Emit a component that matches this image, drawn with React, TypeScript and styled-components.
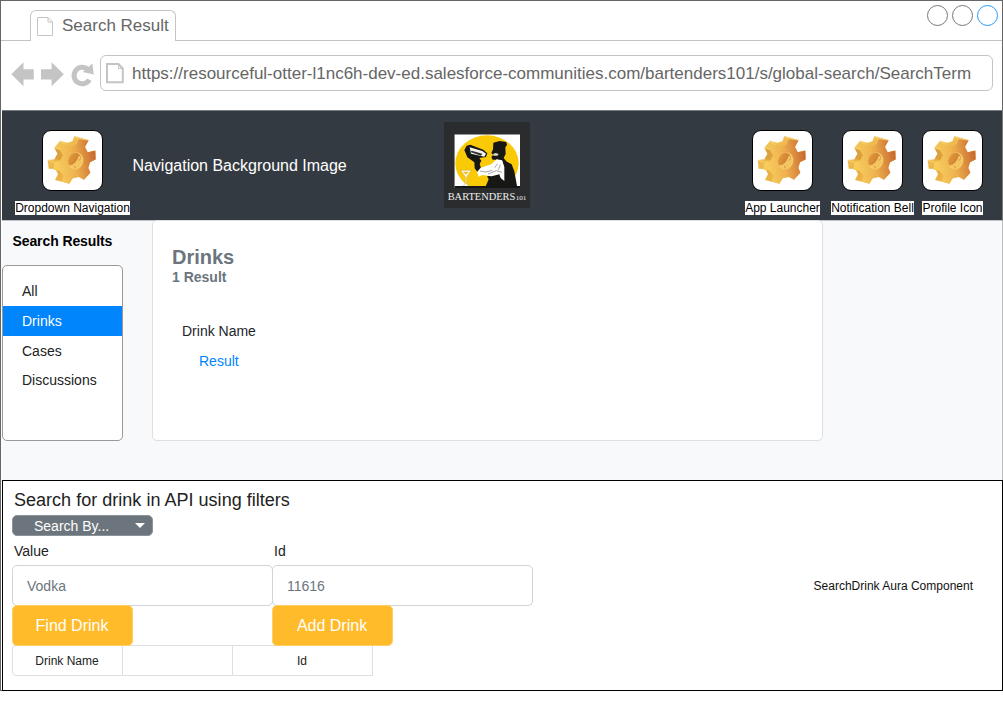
import React from 'react';
import styled, { createGlobalStyle } from 'styled-components';

const GlobalStyle = createGlobalStyle`
  *, *::before, *::after { box-sizing: border-box; }
  body {
    margin: 0;
    background: #fff;
    font-family: "Liberation Sans", Arial, Helvetica, sans-serif;
  }
`;

const Browser = styled.div`
  display: flex;
  flex-direction: column;
  width: 1003px;
  height: 691px;
  border: 1px solid #666;
  background: #fff;
`;

const TabStrip = styled.div`
  display: flex;
  justify-content: space-between;
  height: 40px;
  flex: none;
  padding: 0 4px 0 29px;
  border-bottom: 1px solid #c4c4c4;
`;

const Tab = styled.div`
  display: flex;
  align-items: center;
  align-self: flex-end;
  width: 146px;
  height: 31px;
  margin-bottom: -1px;
  padding-left: 6px;
  gap: 7px;
  border: 1px solid #c4c4c4;
  border-bottom: none;
  border-radius: 6px 6px 0 0;
  background: #fff;
  color: #666;
  font-size: 17px;
  line-height: 30px;
  white-space: nowrap;
`;

const WindowButtons = styled.div`
  display: flex;
  gap: 4px;
  padding-top: 4px;
`;

const WindowButton = styled.span<{ $color: string }>`
  width: 21px;
  height: 21px;
  border: 1px solid ${(p) => p.$color};
  border-radius: 50%;
`;

const Toolbar = styled.div`
  display: flex;
  align-items: flex-start;
  flex: none;
  height: 69px;
  padding: 14px 9px 0 10px;
`;

const HistoryButtons = styled.div`
  display: flex;
  width: 89px;
  padding-top: 6px;
`;

const AddressBar = styled.div`
  display: flex;
  align-items: center;
  flex: 1;
  height: 36px;
  padding-left: 5px;
  gap: 8px;
  border: 1px solid #c4c4c4;
  border-radius: 6px;
  color: #666;
  font-size: 17px;
  white-space: nowrap;
`;

const Address = styled.span`
  padding-top: 2px;
`;

const Page = styled.div`
  display: flex;
  flex-direction: column;
  width: 1001px;
  margin-left: 1px;
`;

const NavBar = styled.header`
  display: flex;
  flex: none;
  height: 111px;
  padding: 11px 19px 0 40px;
  border-top: 1px solid #777b7e;
  border-bottom: 1px solid #bfc2c8;
  border-right: 1px solid #777b7e;
  background: #343a41;
  background-clip: padding-box;
`;

const NavItem = styled.div`
  display: flex;
  flex-direction: column;
  align-items: center;
  width: 61px;
  padding-top: 8px;
`;

const IconTile = styled.div`
  flex: none;
  width: 61px;
  height: 61px;
  border: 1px solid #000;
  border-radius: 9px;
  background: #fff;
  overflow: hidden;
  svg { display: block; margin: -1px; }
`;

const NavLabel = styled.span`
  margin-top: 10px;
  background: #fff;
  color: #000;
  font-size: 12px;
  line-height: 14px;
  white-space: nowrap;
`;

const NavTitle = styled.div`
  width: 312px;
  padding: 35px 0 0 29.4px;
  color: #fff;
  font-size: 16px;
  line-height: 18px;
  white-space: nowrap;
`;

const Logo = styled.div`
  width: 86px;
  height: 86px;
  margin-left: 29px;
  svg { display: block; }
`;

const NavActions = styled.div<{ $gap: number }>`
  display: flex;
  margin-left: ${(p) => p.$gap}px;
`;

const Content = styled.main`
  display: flex;
  align-items: flex-start;
  height: 259px;
  border-right: 1px solid #b9bbbd;
  background: #f8f9fb;
`;

const Sidebar = styled.aside`
  width: 150px;
`;

const SidebarTitle = styled.h2`
  margin: 12px 0 16px 10.5px;
  font-size: 14px;
  line-height: 16px;
  white-space: nowrap;
  letter-spacing: -0.1px;
`;

const FilterList = styled.ul`
  width: 121px;
  height: 176px;
  margin: 0;
  padding: 10px 0 0;
  list-style: none;
  border: 1px solid #999;
  border-radius: 5px;
  background: #fff;
`;

const Filter = styled.li<{ $active?: boolean; $height?: number }>`
  height: ${(p) => p.$height ?? 30}px;
  padding-left: 19px;
  font-size: 14px;
  line-height: 30px;
  background: ${(p) => (p.$active ? '#0085fc' : 'transparent')};
  color: ${(p) => (p.$active ? '#fff' : '#222')};
`;

const ResultCard = styled.section`
  width: 671px;
  height: 221px;
  margin-top: -1px;
  padding: 24px 19px;
  border: 1px solid #dfdfdf;
  border-radius: 5px;
  background: #fff;
`;

const CardTitle = styled.h1`
  margin: 0;
  color: #6c757d;
  font-size: 20px;
  line-height: 24px;
`;

const CardCount = styled.div`
  color: #6c757d;
  font-size: 14px;
  font-weight: bold;
  line-height: 16px;
`;

const ColumnName = styled.div`
  margin: 38px 0 0 10px;
  color: #212529;
  font-size: 14px;
  line-height: 16px;
`;

const ResultLink = styled.a`
  display: block;
  margin: 14px 0 0 27px;
  color: #0085fc;
  font-size: 14px;
  line-height: 16px;
`;

const ApiPanel = styled.section`
  display: flex;
  justify-content: space-between;
  align-items: center;
  height: 211px;
  padding: 0 29px 0 9px;
  border: 1px solid #000;
  background: #fff;
`;

const ApiForm = styled.div`
  align-self: flex-start;
  width: 521px;
`;

const FormTitle = styled.h2`
  margin: 0 0 4px 2px;
  padding-top: 9px;
  color: #222;
  font-size: 18px;
  font-weight: normal;
  line-height: 21px;
  letter-spacing: 0.02px;
`;

const SearchBy = styled.button`
  display: flex;
  align-items: center;
  justify-content: space-between;
  width: 141px;
  height: 21px;
  padding: 0 7px 0 21px;
  border: 1px solid #8b9399;
  border-radius: 5px;
  background: #6c757d;
  color: #fff;
  font: 14px/20px "Liberation Sans", Arial, sans-serif;
`;

const Caret = styled.span`
  border: 5px solid transparent;
  border-top-color: #fff;
  border-bottom: none;
`;

const Fields = styled.div`
  display: flex;
  margin-top: 7px;
`;

const Field = styled.label`
  display: block;
  width: 261px;
  margin-right: -1px;
  color: #222;
  font-size: 14px;
  line-height: 16px;
`;

const FieldName = styled.span`
  display: block;
  margin: 0 0 6px 2px;
`;

const Input = styled.span`
  display: block;
  height: 41px;
  padding-left: 14px;
  border: 1px solid #ced4da;
  border-radius: 5px;
  color: #6c757d;
  line-height: 40px;
`;

const Actions = styled.div`
  display: flex;
  gap: 139px;
  margin-top: -1px;
`;

const Button = styled.button`
  width: 121px;
  height: 41px;
  padding: 0 1px 0 0;
  border: 1px solid #ffcf66;
  border-radius: 5px;
  background: #ffbb29;
  color: #fff;
  font: 16px/38px "Liberation Sans", Arial, sans-serif;
  z-index: 1;
`;

const TableHead = styled.div`
  display: flex;
  width: 361px;
  height: 31px;
  margin-top: -1px;
  border: 1px solid #dfdfdf;
  border-radius: 4px 0 0 4px;
`;

const HeadCell = styled.div<{ $width: number }>`
  width: ${(p) => p.$width}px;
  padding-right: 1px;
  border-right: 1px solid #dfdfdf;
  color: #222;
  font-size: 12px;
  line-height: 30px;
  text-align: center;
  &:last-child { border-right: none; }
`;

const Note = styled.span`
  color: #111;
  font-size: 12px;
  line-height: 14px;
  white-space: nowrap;
`;

function TabDocumentIcon() {
  return (
    <svg width="18" height="20" viewBox="0 0 18 20" fill="none" stroke="#c4c4c4" style={{ flex: 'none' }}>
      <path d="M0.5 1.5H11L15.5 6V19.5H0.5Z" />
      <path d="M11 1.5V6H15.5" />
    </svg>
  );
}

function AddressDocumentIcon() {
  return (
    <svg width="18" height="22" viewBox="0 0 18 22" fill="none" stroke="#c4c4c4" style={{ flex: 'none' }}>
      <path d="M1 2H12.5L16.8 6.5V20.2H1Z" strokeWidth="2" />
      <path d="M12.5 2V6.5H17" />
    </svg>
  );
}

function HistoryIcons() {
  return (
    <svg width="86" height="28" viewBox="11 61 86 28">
      <g fill="#c4c4c4">
        <path d="M11.3 74.3 23.5 62.3V69.3H33.7V79.5H23.5V86.3Z" />
        <path d="M63.8 74.3 51.6 62.3V69.3H41V79.5H51.6V86.3Z" />
        <path d="M92.3 63.5 93.8 74.4 82.7 72Z" />
      </g>
      <path d="M88.2 69.6A8.3 8.3 0 1 0 89.5 79.8" fill="none" stroke="#c4c4c4" strokeWidth="5" />
    </svg>
  );
}

function GearIcon({ id }: { id: string }) {
  return (
    <svg width="61" height="61" viewBox="-12 -12 183 183">
      <defs>
        <linearGradient id={`${id}-face`} x1="0.1" y1="0.6" x2="1" y2="0.45">
          <stop offset="0" stopColor="#f7cc5c" />
          <stop offset="0.45" stopColor="#eeb04e" />
          <stop offset="1" stopColor="#c96a30" />
        </linearGradient>
        <linearGradient id={`${id}-side`} x1="0" y1="0" x2="0.8" y2="1">
          <stop offset="0" stopColor="#f8d466" />
          <stop offset="0.55" stopColor="#e9ad42" />
          <stop offset="1" stopColor="#f3c452" />
        </linearGradient>
        <linearGradient id={`${id}-hole`} x1="0" y1="0.5" x2="1" y2="0.5">
          <stop offset="0" stopColor="#e09a3c" />
          <stop offset="1" stopColor="#c9742f" />
        </linearGradient>
      </defs>
      <path
        fill={`url(#${id}-side)`}
        d="M85 6 128 18 117 39 125 55 148 49 149 77 132 85 127 101 133 116 113 137 99 128 80 133 70 149 27 138 36 120 28 105 8 104 5 78 25 76 34 59 25 41 42 20 64 26 79 22Z"
      />
      <path fill="#dda03f" d="M26 42 41 47 50 64 43 78 26 76 35 59Z" />
      <path
        fill={`url(#${id}-face)`}
        d="M99 14 128 19 117 39 125 55 148 50 149 76 132 85 127 101 133 116 114 137 99 129 80 133 70 149 47 142 52 125 41 110 22 107 24 84 43 81 52 64 42 46 58 31 75 39 92 32Z"
      />
      <path fill="none" stroke="#fae28c" strokeWidth="2" d="M85 7 99 14 128 19M42 21 58 31M25 41 42 46M6 79 24 84" />
      <ellipse cx="89" cy="81" rx="23" ry="26" fill="#f4cb66" transform="rotate(20 89 81)" />
      <ellipse cx="86" cy="79" rx="19" ry="23" fill={`url(#${id}-hole)`} transform="rotate(24 86 79)" />
      <path d="M70 94Q89 94 99 64Q111 75 102 91Q91 108 76 102Q71 99 70 94Z" fill="#f3c661" />
      <path d="M104 75 98 79M88 103 86 95" stroke="#dc9840" strokeWidth="3" />
    </svg>
  );
}

function BartendersLogo() {
  return (
    <svg width="86" height="86" viewBox="42 37 258 258">
      <defs>
        <clipPath id="logo-frame"><rect x="73" y="74" width="197" height="161" /></clipPath>
      </defs>
      <rect x="42" y="37" width="258" height="258" fill="#2b2c2d" />
      <g clipPath="url(#logo-frame)">
        <rect x="73" y="74" width="197" height="161" fill="#fff" />
        <ellipse cx="171" cy="161" rx="95" ry="84" fill="#fbca06" />
        <path d="M103 121 110 108 121 105 160 120 172 131 168 142 148 145 154 153 149 163 154 178 143 188 134 176 133 158 112 143Z" fill="#171816" />
        <path d="M119 113 157 124 168 132 163 141 123 132Z" fill="#f5f5f0" />
        <path d="M125 123 157 132 153 138 121 127Z" fill="#34342e" />
        <path d="M190 99 209 94 229 97 231 106 226 113 227 133 221 145 229 155 245 164 253 185 262 234H165L176 209 171 200 198 196 212 188 222 174 217 153 201 150 188 150 184 142 190 136 184 130 189 119Z" fill="#171816" />
        <path d="M141 187 152 174 184 164 200 149 216 152 223 172 223 214 212 205 208 194 184 200 157 196 146 201Z" fill="#fff" />
        <path d="M150 184 168 187 187 182M174 193 199 183 216 188M203 162 194 174M211 165 205 180" fill="none" stroke="#777" strokeWidth="2" />
        <path d="M189 133 197 130 206 133 202 138 191 138Z" fill="#ddd9c9" />
        <path d="M92 182H124L110 202V223L120 230H97L106 223V202Z" fill="#fffbea" stroke="#a88a31" />
        <path d="M98 186H117L108 195Z" fill="#eec32c" />
        <path d="M73 233H270" stroke="#151615" strokeWidth="8" />
      </g>
      <g fill="#eee" fontFamily="Liberation Serif, Times New Roman, serif">
        <text x="53" y="271" fontSize="31" textLength="203" lengthAdjust="spacingAndGlyphs">BARTENDERS</text>
        <text x="257" y="271" fontSize="20" textLength="32" lengthAdjust="spacingAndGlyphs">101</text>
      </g>
    </svg>
  );
}

function GearNavItem({ label, id }: { label: string; id: string }) {
  return (
    <NavItem>
      <IconTile><GearIcon id={id} /></IconTile>
      <NavLabel>{label}</NavLabel>
    </NavItem>
  );
}

export default function App() {
  return (
    <>
      <GlobalStyle />
      <Browser>
        <TabStrip>
          <Tab><TabDocumentIcon />Search Result</Tab>
          <WindowButtons>
            <WindowButton $color="#777" />
            <WindowButton $color="#777" />
            <WindowButton $color="#2a98ff" />
          </WindowButtons>
        </TabStrip>
        <Toolbar>
          <HistoryButtons><HistoryIcons /></HistoryButtons>
          <AddressBar>
            <AddressDocumentIcon />
            <Address>https://resourceful-otter-l1nc6h-dev-ed.salesforce-communities.com/bartenders101/s/global-search/SearchTerm</Address>
          </AddressBar>
        </Toolbar>
        <Page>
          <NavBar>
            <GearNavItem id="menu" label="Dropdown Navigation" />
            <NavTitle>Navigation Background Image</NavTitle>
            <Logo><BartendersLogo /></Logo>
            <NavActions $gap={222}><GearNavItem id="apps" label="App Launcher" /></NavActions>
            <NavActions $gap={29}><GearNavItem id="bell" label="Notification Bell" /></NavActions>
            <NavActions $gap={19}><GearNavItem id="profile" label="Profile Icon" /></NavActions>
          </NavBar>
          <Content>
            <Sidebar>
              <SidebarTitle>Search Results</SidebarTitle>
              <FilterList>
                <Filter>All</Filter>
                <Filter $active>Drinks</Filter>
                <Filter $height={29}>Cases</Filter>
                <Filter>Discussions</Filter>
              </FilterList>
            </Sidebar>
            <ResultCard>
              <CardTitle>Drinks</CardTitle>
              <CardCount>1 Result</CardCount>
              <ColumnName>Drink Name</ColumnName>
              <ResultLink>Result</ResultLink>
            </ResultCard>
          </Content>
          <ApiPanel>
            <ApiForm>
              <FormTitle>Search for drink in API using filters</FormTitle>
              <SearchBy>Search By...<Caret /></SearchBy>
              <Fields>
                <Field><FieldName>Value</FieldName><Input>Vodka</Input></Field>
                <Field><FieldName>Id</FieldName><Input>11616</Input></Field>
              </Fields>
              <Actions>
                <Button>Find Drink</Button>
                <Button>Add Drink</Button>
              </Actions>
              <TableHead>
                <HeadCell $width={110}>Drink Name</HeadCell>
                <HeadCell $width={110} />
                <HeadCell $width={139}>Id</HeadCell>
              </TableHead>
            </ApiForm>
            <Note>SearchDrink Aura Component</Note>
          </ApiPanel>
        </Page>
      </Browser>
    </>
  );
}
